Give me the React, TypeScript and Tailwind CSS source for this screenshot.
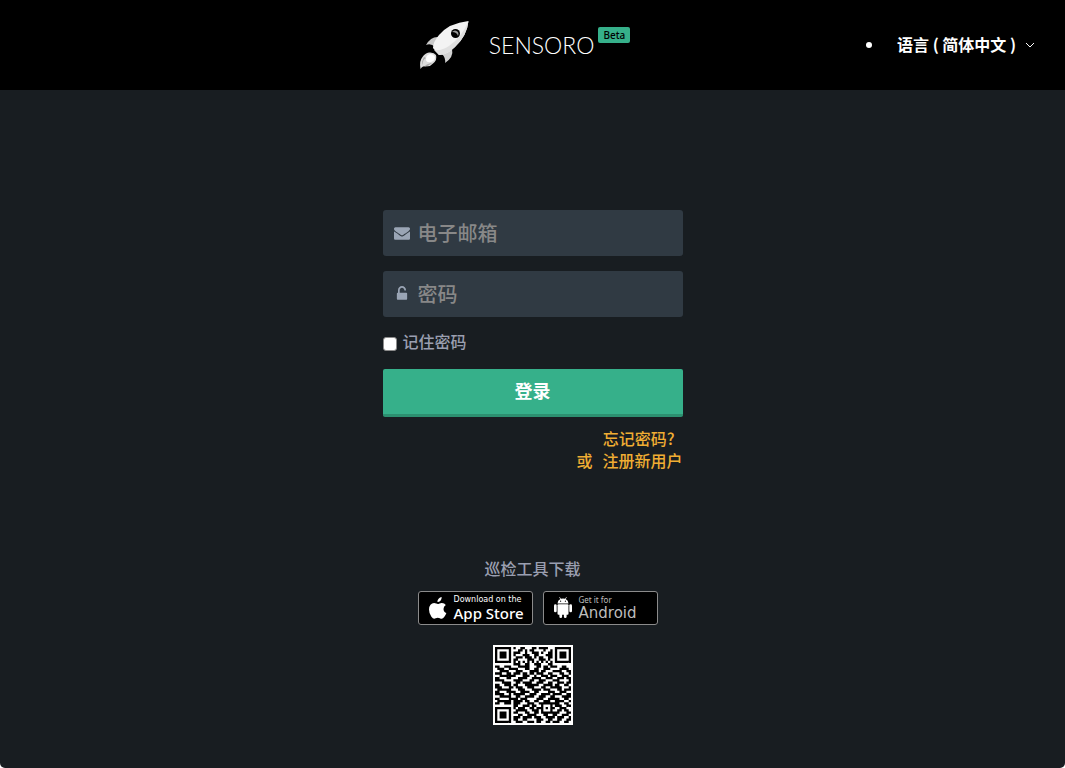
import { useState } from 'react';

const QR_ROWS = [
  '111111101001100011011110001111111',
  '100000100011010110000100101000001',
  '101110101110010011101001101011101',
  '101110101000111001100011101011101',
  '101110100111011101011001101011101',
  '100000101100001110011101001000001',
  '111111101010101010101010101111111',
  '000000001110011001110001100000000',
  '110011100011111000110110111001100',
  '011100111100011001100111000011110',
  '001111000111000111101100011110011',
  '111001101110110110111001100011001',
  '001111111000111001001110111001110',
  '110001100011110011110011100111011',
  '111100001111000110011100011100001',
  '000111100110111100111001100111011',
  '110011101100011111100111101100110',
  '111000110111001110001100111110001',
  '011111100011100011110111000110111',
  '110001111001111001100001110011100',
  '111100101111100111001111011110011',
  '001111100110011110011100110001111',
  '110000111101110000111001111100110',
  '011111101111011001100111001111001',
  '110011101110001110011111111100110',
  '000000001100111011001000101110011',
  '111111101011100110111010110011100',
  '100000100111110011101000100110110',
  '101110101100011001101111111100011',
  '101110100011001111000110011001110',
  '101110101110111101110011110111001',
  '100000101100110000111001100110011',
  '111111100111001110110011011100110',
];

const QR_PATH = QR_ROWS.flatMap((row, y) =>
  [...row].map((bit, x) => (bit === '1' ? `M${x} ${y}h1v1h-1z` : '')),
).join('');

function Rocket() {
  return (
    <svg className="h-[50px] w-[50px]" viewBox="0 0 50 50" aria-hidden="true">
      <path d="M20 17Q12 16 7 25Q12 23 16 27Z" fill="#c9c9c9" />
      <path d="M33 29Q35 37 26 43Q27 38 23 34Z" fill="#d2d2d2" />
      <path d="M49.500 1Q30 3 20 15Q14 22 14 28L20 35Q28 35 36 27Q48 16 49.500 1Z" fill="#f3f3f3" />
      <path d="M49.500 1Q43 17 30 26Q23 31 15 30L20 35Q28 35 36 27Q48 16 49.500 1Z" fill="#e0e0e0" />
      <circle cx="36.500" cy="13.500" r="4.500" fill="#000" />
      <path d="M33 12Q36 9 39 12Q40 14 39 16Q38 12 33 12Z" fill="#999" />
      <path d="M10 32.500Q15 32 17 35Q18.500 40 14 43.500Q11 47 7 46Q3 46 1.500 49Q0 41 3.500 37Q6 33 10 32.500Z" fill="#dcdcdc" />
      <path d="M11 34Q15 34 16 37Q16 41 12 42Q7 43 7 39Q7 35 11 34Z" fill="#fff" />
      <path d="M5 37Q2 42 4 45Q3 40 7 38M12 43Q7 44 5 47Q10 46 13 43" fill="#aaa" />
    </svg>
  );
}

function EnvelopeIcon() {
  return (
    <svg className="w-4" viewBox="0 0 1792 1792" fill="currentColor" aria-hidden="true">
      <path d="M1792 710v794q0 66-47 113t-113 47h-1472q-66 0-113-47t-47-113v-794q44 49 101 87 362 246 497 345 57 42 92.500 65.500t94.500 48 110 24.500h2q51 0 110-24.500t94.500-48 92.500-65.500q170-123 498-345 57-39 100-87zM1792 416q0 79-49 151t-122 123q-376 261-468 325-10 7-42.500 31t-54 38.500-52 32.500-57.500 27-50 9h-2q-23 0-50-9t-57.500-27-52-32.500-54-38.500-42.500-31q-91-64-262-182.500t-205-142.500q-62-42-117-115.500t-55-136.500q0-78 41.500-130t118.500-52h1472q65 0 112.500 47t47.500 113z" />
    </svg>
  );
}

function UnlockIcon() {
  return (
    <svg className="w-4" viewBox="0 0 1792 1792" fill="currentColor" aria-hidden="true">
      <path d="M1376 768q40 0 68 28t28 68v576q0 40-28 68t-68 28h-960q-40 0-68-28t-28-68v-576q0-40 28-68t68-28h32v-320q0-185 131.500-316.500t316.500-131.500 316.500 131.500 131.500 316.500q0 26-19 45t-45 19h-64q-26 0-45-19t-19-45q0-106-75-181t-181-75-181 75-75 181v320h736z" />
    </svg>
  );
}

function AppleIcon() {
  return (
    <svg className="h-6 w-5 shrink-0" viewBox="0 0 20 24" fill="#fff" aria-hidden="true">
      <path d="M13.700 1Q13.800 3.200 12.500 4.700Q11.100 6.200 9.400 6.100Q9.300 4.200 10.600 2.700Q11.900 1.300 13.700 1ZM17.800 9Q15.500 10.500 15.500 13Q15.500 15.900 18.400 17.100Q17.600 19.300 16.200 21.100Q15 22.700 13.600 22.700Q12.800 22.700 11.900 22.200Q10.800 21.800 9.800 21.800Q8.700 21.900 7.700 22.300Q6.900 22.700 6.200 22.700Q4.900 22.700 3.400 20.700Q1 17.600 1 13.500Q1 10.600 2.500 8.800Q4 7 6.100 7Q7 7 8.200 7.600Q9.300 8 9.800 8Q10.200 8 11.600 7.400Q12.900 6.900 13.900 7Q16.400 7.100 17.800 9Z" />
    </svg>
  );
}

function AndroidIcon() {
  return (
    <svg className="h-6 w-5 shrink-0" viewBox="0 0 20 24" fill="#fff" aria-hidden="true">
      <path d="M4.500 7.500Q4.700 4.400 7.300 3L6.200 1.300L6.700 1L7.900 2.800Q10 2.100 12.100 2.800L13.300 1L13.800 1.300L12.700 3Q15.300 4.400 15.500 7.500Z" />
      <rect x="4.500" y="8.300" width="11" height="10.500" rx="1" />
      <rect x="1" y="8.300" width="2.700" height="8" rx="1.300" />
      <rect x="16.300" y="8.300" width="2.700" height="8" rx="1.300" />
      <rect x="6.400" y="16" width="2.700" height="6" rx="1.300" />
      <rect x="10.900" y="16" width="2.700" height="6" rx="1.300" />
      <circle cx="7.600" cy="5.200" r=".6" fill="#000" />
      <circle cx="12.400" cy="5.200" r=".6" fill="#000" />
    </svg>
  );
}

export default function App() {
  const [remember, setRemember] = useState(false);

  return (
    <div className="flex min-h-screen flex-col rounded-b-[5px] bg-[#181d21] font-['Noto_Sans_CJK_SC','Liberation_Sans',sans-serif] text-base font-medium text-[#9a9fb0]">
      <header className="grid h-[90px] shrink-0 grid-cols-[1fr_auto_1fr] items-center bg-black px-[29px] text-white">
        <div />
        <a href="#" className="mr-4 flex items-center" aria-label="SENSORO Beta">
          <Rocket />
          <span className="ml-5 font-['Lato'] text-[23px] font-light">SENSORO</span>
          <span className="mb-5 ml-1 rounded-[2px] bg-[#36b08a] px-[5px] font-['Noto_Sans'] text-[10px] leading-4 text-black">
            Beta
          </span>
        </a>
        <ul className="list-disc justify-self-end">
          <li>
            <button type="button" className="flex items-center gap-2 pl-3 font-bold">
              <span className="pb-0.5">语言 ( 简体中文 )</span>
              <svg className="h-3 w-3" viewBox="0 0 12 12" fill="none" stroke="currentColor" aria-hidden="true">
                <path d="M2 4l4 4 4-4" />
              </svg>
            </button>
          </li>
        </ul>
      </header>

      <main className="flex flex-col items-center pt-[120px] pb-10">
        <form className="w-[300px]" onSubmit={(event) => event.preventDefault()}>
          <label className="flex h-[46px] items-center gap-2 rounded-[3px] bg-[#303a43] px-[11px] text-[#9aa5b5]">
            <EnvelopeIcon />
            <input type="email" aria-label="电子邮箱" placeholder="电子邮箱" className="min-w-0 flex-1 bg-transparent text-xl outline-none placeholder:text-[#888888]" />
          </label>
          <label className="mt-[15px] flex h-[46px] items-center gap-2 rounded-[3px] bg-[#303a43] px-[11px] text-[#9aa5b5]">
            <UnlockIcon />
            <input type="password" aria-label="密码" placeholder="密码" className="min-w-0 flex-1 bg-transparent text-xl outline-none placeholder:text-[#888888]" />
          </label>
          <label className="mt-[13px] flex items-center gap-[6px] leading-[22px]">
            <input
              type="checkbox"
              checked={remember}
              onChange={(event) => setRemember(event.target.checked)}
              className="mt-[5px] h-[14px] w-[14px] appearance-none rounded-[3px] border border-[#8c8c8c] bg-white checked:bg-[#36b08a]"
            />
            记住密码
          </label>
          <button type="submit" className="mt-[17px] h-12 w-full rounded-[2px] border-b-[3px] border-[#2c9070] bg-[#36b08a] pb-1 text-lg font-bold text-white">
            登录
          </button>
          <div className="mt-[10px] flex flex-col items-end leading-[22px] text-[#f0ad33]">
            <a href="#" className="mr-2">忘记密码?</a>
            <span className="flex gap-[10px]">
              或<a href="#">注册新用户</a>
            </span>
          </div>
        </form>

        <section className="mt-[85px] flex flex-col items-center">
          <h2 className="leading-6">巡检工具下载</h2>
          <div className="mt-[11px] flex gap-[10px] pl-[10px] text-white">
            <a href="#" className="flex h-[34px] w-[115px] items-center gap-[6px] rounded-[3px] border border-[#8b8b8b] bg-black pl-[9px] font-['Noto_Sans']">
              <AppleIcon />
              <span className="flex flex-col whitespace-nowrap pb-px">
                <span className="font-['DejaVu_Sans'] text-[8px] font-normal leading-[10px]">Download on the</span>
                <span className="text-[15px] leading-4">App Store</span>
              </span>
            </a>
            <a href="#" className="flex h-[34px] w-[115px] items-center gap-[6px] rounded-[3px] border border-[#8b8b8b] bg-black pl-[9px] font-['DejaVu_Sans']">
              <AndroidIcon />
              <span className="flex flex-col whitespace-nowrap pb-px text-[#bdbdbd]">
                <span className="font-['Noto_Sans'] text-[8px] font-normal leading-[10px]">Get it for</span>
                <span className="text-[15px] leading-4">Android</span>
              </span>
            </a>
          </div>
          <svg className="mt-5 h-20 w-20 bg-white p-[2px]" viewBox="0 0 33 33" role="img" aria-label="QR">
            <path d={QR_PATH} fill="#000" />
          </svg>
        </section>
      </main>
    </div>
  );
}
